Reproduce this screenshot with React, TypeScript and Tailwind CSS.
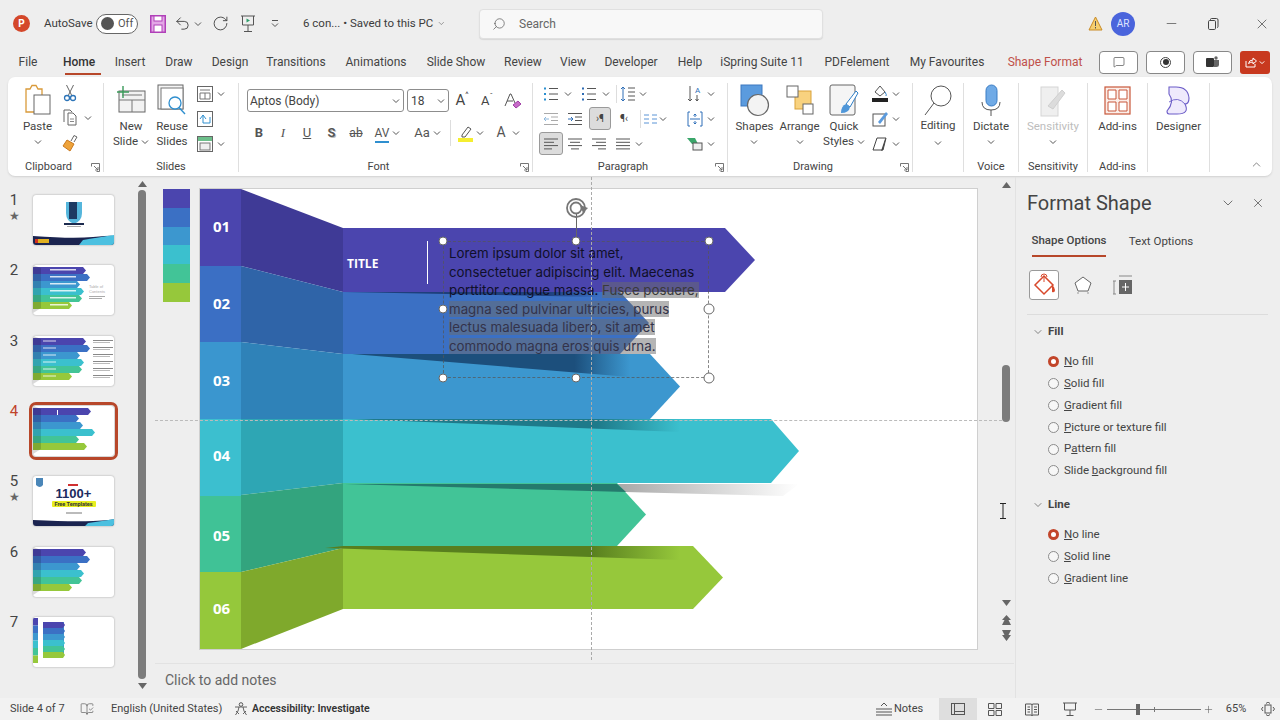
import type { ReactNode } from "react";
import {
  BookOpenCheck,
  ChevronDown,
  ChevronUp,
  MessageSquare,
  Minus,
  Plus,
  RotateCw,
  Search,
  Undo2,
  X,
} from "lucide-react";

const ink = "#444444";

function Chev({ className = "" }: { className?: string }) {
  return (
    <svg width="8" height="6" viewBox="0 0 8 6" className={`shrink-0 ${className}`}>
      <path d="M1 1.5 4 4.5 7 1.5" fill="none" stroke="#555" strokeWidth="1" />
    </svg>
  );
}

function Lines({ kind, color = "#555" }: { kind: "left" | "center" | "right" | "justify"; color?: string }) {
  const rows: [number, number][] =
    kind === "left"
      ? [[1, 15], [1, 11], [1, 15], [1, 9]]
      : kind === "center"
        ? [[1, 15], [3, 13], [1, 15], [4, 12]]
        : kind === "right"
          ? [[1, 15], [5, 15], [1, 15], [7, 15]]
          : [[1, 15], [1, 15], [1, 15], [1, 15]];
  return (
    <svg width="16" height="14" viewBox="0 0 16 14">
      {rows.map(([a, b], i) => (
        <path key={i} d={`M${a} ${2 + i * 3.3}H${b}`} stroke={color} strokeWidth="1" />
      ))}
    </svg>
  );
}

function BulletIcon({ numbered = false }: { numbered?: boolean }) {
  return (
    <svg width="16" height="16" viewBox="0 0 16 16">
      {[2.5, 8, 13.5].map((y) => (
        <g key={y}>
          <rect x="1" y={y - 1} width="2" height="2" fill={numbered ? "#2e6db5" : "#2a8fd0"} />
          <path d={`M6 ${y}H15`} stroke="#555" />
        </g>
      ))}
    </svg>
  );
}

function IconBox({ w, children, on = false }: { w: number; children: ReactNode; on?: boolean }) {
  return (
    <div
      style={{ width: w }}
      className={`flex h-[23px] shrink-0 items-center justify-center gap-[3px] rounded-[3px] ${on ? "border border-[#9a9a9a] bg-[#dcdcdc]" : ""}`}
    >
      {children}
    </div>
  );
}

function Launcher() {
  return (
    <svg width="9" height="9" viewBox="0 0 9 9" className="absolute right-[3px] top-[4px]">
      <path d="M.5 3.5V.5H8.500V8.500H5.500M3 3 7 7M7 4V7H4" fill="none" stroke="#666" strokeWidth="0.9" />
    </svg>
  );
}

function Group({
  width,
  label,
  launcher = false,
  last = false,
  children,
}: {
  width: number;
  label?: string;
  launcher?: boolean;
  last?: boolean;
  children: ReactNode;
}) {
  return (
    <div style={{ width }} className="flex shrink-0">
      <div className="flex min-w-0 flex-1 flex-col">
        <div className="flex h-[78px] min-w-0">{children}</div>
        <div className={`relative h-[16px] text-center text-[11px] leading-[16px] text-[#444] ${launcher ? "pr-[14px]" : ""}`}>
          <span>{label}</span>
          {launcher && <Launcher />}
        </div>
      </div>
      {!last && <div className="mb-[4px] mt-[2px] w-px bg-[#dfdfdf]" />}
    </div>
  );
}

function BigButton({
  width,
  icon,
  lines,
  chevron = "below",
  muted = false,
}: {
  width: number;
  icon: ReactNode;
  lines: string[];
  chevron?: "below" | "inline" | "none";
  muted?: boolean;
}) {
  return (
    <div style={{ width }} className="flex shrink-0 flex-col items-center">
      <div className="flex h-[38px] items-center justify-center">{icon}</div>
      <div className={`text-center text-[11.500px] leading-[15px] ${muted ? "text-[#bdbdbd]" : "text-[#444]"}`}>
        {lines.map((l, i) => (
          <div key={l} className="flex items-center justify-center gap-[3px] whitespace-nowrap">
            {l}
            {chevron === "inline" && i === lines.length - 1 && <Chev />}
          </div>
        ))}
        {chevron === "below" && <Chev className="mx-auto mt-[5px]" />}
      </div>
    </div>
  );
}

function TitleBar() {
  return (
    <div className="flex h-[47px] shrink-0 items-center text-[12px] text-[#3c3c3c]">
      <div className="ml-[13px] flex h-[17px] w-[17px] items-center justify-center rounded-full bg-[#d4472a] text-[10px] font-bold text-white">
        P
      </div>
      <span className="ml-[14px] w-[44px] whitespace-nowrap text-[11.500px]">AutoSave</span>
      <div className="ml-[8px] flex h-[20px] w-[42px] items-center gap-[4px] rounded-full border border-[#666] bg-white pl-[4px]">
        <div className="h-[13px] w-[13px] rounded-full bg-[#555]" />
        <span className="text-[11px] leading-none text-[#555]">Off</span>
      </div>
      <svg width="16" height="18" viewBox="0 0 16 18" className="ml-[12px]">
        <rect x=".75" y=".75" width="14.500" height="16.500" fill="#e3a7e6" stroke="#b040b8" strokeWidth="1.500" />
        <rect x="4" y="1" width="8" height="5" fill="#fff" stroke="#b040b8" />
        <rect x="4" y="10" width="8" height="7" fill="#fff" stroke="#b040b8" />
      </svg>
      <Undo2 size={17} strokeWidth={1.300} className="ml-[8px] text-[#444]" />
      <Chev className="ml-[3px]" />
      <RotateCw size={17} strokeWidth={1.300} className="ml-[10px] text-[#444]" />
      <svg width="16" height="18" viewBox="0 0 16 18" className="ml-[11px]">
        <path d="M1 1H15M2.500 1V10H13.500V1M8 10V16M4 16.500H12" fill="none" stroke="#555" />
        <path d="M6.500 3.500 10 5.500 6.500 7.500Z" fill="#2f9d6a" />
      </svg>
      <svg width="8" height="10" viewBox="0 0 8 10" className="ml-[15px]">
        <path d="M1 1.500H7M1 4.500 4 7.500 7 4.500" fill="none" stroke="#555" />
      </svg>
      <span className="ml-[24px] flex w-[143px] items-center gap-[4px] whitespace-nowrap text-[11.500px]">
        6 con... • Saved to this PC <ChevronDown size={13} strokeWidth={1.300} />
      </span>
      <div className="ml-[33px] flex h-[30px] w-[344px] items-center rounded-[4px] border border-[#e0e0e0] bg-[#f8f8f8] pl-[12px] shadow-[0_1px_1px_#d8d8d8]">
        <Search size={14} strokeWidth={1.200} className="-scale-x-100 text-[#555]" />
        <span className="ml-[13px] text-[12px] text-[#666]">Search</span>
      </div>
      <svg width="15" height="15" viewBox="0 0 15 15" className="ml-[265px]">
        <path d="M7.500 1 14 14H1Z" fill="#f6cf70" stroke="#c98a25" />
        <path d="M7.500 5V10M7.500 11V12.500" stroke="#555" />
      </svg>
      <div className="ml-[8px] flex h-[24px] w-[24px] items-center justify-center rounded-full bg-[#4a64dc] text-[10px] text-[#dfe5ff]">
        AR
      </div>
      <Minus size={15} strokeWidth={1.100} className="ml-[29px] text-[#444]" />
      <svg width="12" height="12" viewBox="0 0 12 12" className="ml-[28px]">
        <path d="M3.500 2.500V1.500Q3.500 .5 4.500 .5H9.500Q11 .5 11 2V8.500Q11 9.500 10 9.500" fill="none" stroke="#444" />
        <rect x="1.500" y="2.500" width="7" height="9" rx="1.200" fill="none" stroke="#444" />
      </svg>
      <X size={16} strokeWidth={1.100} className="ml-[35px] text-[#444]" />
    </div>
  );
}

const tabs: [string, number][] = [
  ["File", 40],
  ["Home", 62],
  ["Insert", 40],
  ["Draw", 58],
  ["Design", 44],
  ["Transitions", 88],
  ["Animations", 72],
  ["Slide Show", 88],
  ["Review", 46],
  ["View", 54],
  ["Developer", 62],
  ["Help", 56],
  ["iSpring Suite 11", 88],
  ["PDFelement", 102],
  ["My Favourites", 78],
  ["Shape Format", 118],
];

function TabRow() {
  return (
    <div className="flex h-[30px] shrink-0 items-center pl-[8px] text-[12px] text-[#444]">
      {tabs.map(([name, w]) => (
        <div key={name} style={{ width: w }} className="relative flex h-full shrink-0 items-center justify-center whitespace-nowrap">
          <span className={name === "Shape Format" ? "text-[#c0504a]" : name === "Home" ? "font-medium text-[#333]" : ""}>{name}</span>
          {name === "Home" && <div className="absolute bottom-[2px] left-[17px] h-[2px] w-[36px] bg-[#b7472a]" />}
        </div>
      ))}
      <div className="ml-[-5px] flex h-[23px] w-[39px] items-center justify-center rounded-[4px] border border-[#888] bg-white">
        <MessageSquare size={12} strokeWidth={1.200} className="text-[#333]" />
      </div>
      <div className="ml-[8px] flex h-[23px] w-[39px] items-center justify-center rounded-[4px] border border-[#888] bg-white">
        <div className="flex h-[11px] w-[11px] items-center justify-center rounded-full border border-[#444]">
          <div className="h-[6px] w-[6px] rounded-full bg-[#333]" />
        </div>
      </div>
      <div className="ml-[8px] flex h-[23px] w-[39px] items-center justify-center rounded-[4px] border border-[#888] bg-white">
        <svg width="13" height="13" viewBox="0 0 13 13">
          <rect x="0" y="2" width="8" height="9" rx="1" fill="#333" />
          <path d="M8 4H13V9Q13 11 10.500 11H8Z" fill="#666" />
          <circle cx="10" cy="2" r="1.700" fill="#666" />
        </svg>
      </div>
      <div className="ml-[8px] flex h-[23px] w-[30px] items-center justify-center gap-[2px] rounded-[3px] bg-[#c8391f]">
        <svg width="12" height="12" viewBox="0 0 12 12">
          <path d="M1 5V11H10V8M3.500 7.500Q4 4 8 4V2L11.500 5 8 8V6Q5.500 6 3.500 7.500Z" fill="none" stroke="#fff" />
        </svg>
        <svg width="6" height="5" viewBox="0 0 8 6">
          <path d="M1 1.500 4 4.500 7 1.500" fill="none" stroke="#fff" strokeWidth="1.300" />
        </svg>
      </div>
    </div>
  );
}

function Ribbon() {
  return (
    <div className="ml-[8px] flex h-[99px] w-[1264px] shrink-0 rounded-[7px] bg-white pt-[4px] shadow-[0_1px_2px_#d0d0d0]">
      <Group width={96} label="Clipboard" launcher>
        <BigButton
          width={59}
          lines={["Paste"]}
          icon={
            <svg width="26" height="32" viewBox="0 0 26 32">
              <path d="M1 5H5L7 1.500H11L13 5H17V28H1Z" fill="#fff" stroke="#d99a3a" strokeWidth="1.300" />
              <rect x="9" y="11" width="16" height="19" fill="#fff" stroke="#666" />
            </svg>
          }
        />
        <div className="-ml-[9px] flex flex-col">
          <IconBox w={24}>
            <svg width="14" height="18" viewBox="0 0 14 18">
              <path d="M3.500 1 9 12M10.500 1 5 12" stroke="#666" fill="none" />
              <circle cx="4" cy="14" r="2.500" fill="none" stroke="#2c74b8" strokeWidth="1.300" />
              <circle cx="10" cy="14" r="2.500" fill="none" stroke="#2c74b8" strokeWidth="1.300" />
            </svg>
          </IconBox>
          <div className="mt-[2px] flex items-center gap-[2px]">
            <IconBox w={24}>
              <svg width="14" height="17" viewBox="0 0 14 17">
                <path d="M1 13V1H7L9 3M5 16V4H10L13 7V16Z" fill="#fff" stroke="#666" />
                <path d="M7 10H11M7 12.500H11" stroke="#888" />
              </svg>
            </IconBox>
            <Chev />
          </div>
          <div className="mt-[2px]">
            <IconBox w={24}>
              <svg width="16" height="18" viewBox="0 0 16 18">
                <path d="M9 7 12 1.500 15 3 12 8" fill="#fff" stroke="#666" />
                <path d="M5 6 12 10 8 17 1 12Z" fill="#eea33b" stroke="#c9791f" />
              </svg>
            </IconBox>
          </div>
        </div>
      </Group>
      <Group width={135} label="Slides">
        <div className="ml-[4px]">
          <BigButton
            width={46}
            lines={["New", "Slide"]}
            chevron="inline"
            icon={
              <svg width="30" height="28" viewBox="0 0 30 28">
                <rect x="3" y="5" width="26" height="21" fill="#f2f2f2" stroke="#666" />
                <path d="M6 9H26M3 14H29M16 14V26" stroke="#777" fill="none" />
                <path d="M7 0V12M1 6H13" stroke="#3a9a5a" strokeWidth="1.400" />
              </svg>
            }
          />
        </div>
        <BigButton
          width={36}
          lines={["Reuse", "Slides"]}
          chevron="none"
          icon={
            <svg width="30" height="32" viewBox="0 0 30 32">
              <rect x="1" y="1" width="25" height="24" fill="#f5f5f5" stroke="#666" />
              <rect x="4" y="4" width="22" height="21" fill="#fff" stroke="#777" />
              <circle cx="18" cy="19" r="6" fill="#fff" stroke="#2f8fcf" strokeWidth="1.300" />
              <path d="M22 23.500 28 30" stroke="#2f8fcf" strokeWidth="1.400" />
            </svg>
          }
        />
        <div className="ml-[6px] flex flex-col">
          {[0, 1, 2].map((i) => (
            <div key={i} className="flex h-[25px] items-center gap-[4px]">
              <svg width="16" height="16" viewBox="0 0 16 16" className="ml-[1px]">
                <rect x=".5" y=".5" width="15" height="15" fill="#fff" stroke="#666" />
                {i === 0 && <path d="M3 4H13M8 7V13M3 7H13V13H3Z" stroke="#777" fill="none" />}
                {i === 1 && <path d="M3 8 6 4 9 8M6 4V12H13V6" stroke="#2f8fcf" fill="none" />}
                {i === 2 && (
                  <>
                    <rect x="1" y="1" width="14" height="4" fill="#6cbf8a" />
                    <rect x="3" y="7" width="10" height="7" fill="#eee" stroke="#777" />
                  </>
                )}
              </svg>
              {i !== 1 && <Chev />}
            </div>
          ))}
        </div>
      </Group>
      <Group width={294} label="Font" launcher>
        <div className="ml-[8px] flex flex-col">
          <div className="mt-[8px] flex h-[23px] items-center">
            <div className="flex h-[23px] w-[157px] items-center justify-between rounded-[3px] border border-[#8d8d8d] pl-[2px] pr-[3px] text-[12px] text-[#444]">
              Aptos (Body) <Chev />
            </div>
            <div className="ml-[3px] flex h-[23px] w-[42px] items-center justify-between rounded-[3px] border border-[#8d8d8d] pl-[3px] pr-[3px] text-[12px] text-[#444]">
              18 <Chev />
            </div>
            <div className="flex w-[26px] items-start justify-center text-[15px] text-[#444]">
              A<span className="text-[8px]">^</span>
            </div>
            <div className="flex w-[24px] items-start justify-center text-[13px] text-[#444]">
              A<span className="text-[8px]">ˇ</span>
            </div>
            <svg width="18" height="18" viewBox="0 0 18 18" className="ml-[5px]">
              <path d="M1 14 6 2H7L11 11M3 9H9" fill="none" stroke="#555" />
              <path d="M9 13 14 9 17 12 12 16Z" fill="#c76bc9" stroke="#a03fa5" />
            </svg>
          </div>
          <div className="mt-[9px] flex h-[23px] items-center text-[13px] text-[#555]">
            <IconBox w={24}><span className="font-bold">B</span></IconBox>
            <IconBox w={24}><span className="font-['Liberation_Serif',serif] italic">I</span></IconBox>
            <IconBox w={24}><span className="underline">U</span></IconBox>
            <IconBox w={25}><span className="font-semibold [text-shadow:1px_1px_0_#bbb]">S</span></IconBox>
            <IconBox w={24}><span className="text-[12px] line-through">ab</span></IconBox>
            <IconBox w={39}>
              <span className="relative text-[12px] leading-none">
                AV
                <span className="absolute -bottom-[4px] left-0 h-[2px] w-full bg-[#2f8fcf]" />
              </span>
              <Chev />
            </IconBox>
            <IconBox w={41}>
              <span className="text-[13px]">Aa</span>
              <Chev />
            </IconBox>
            <div className="mx-[2px] h-[26px] w-px bg-[#ddd]" />
            <IconBox w={36}>
              <svg width="15" height="18" viewBox="0 0 15 18">
                <path d="M4 11 10 3 13 5 7 13H4Z" fill="#fff" stroke="#555" />
                <rect x="0" y="14" width="15" height="4" fill="#f5ee30" />
              </svg>
              <Chev />
            </IconBox>
            <IconBox w={38}>
              <span className="text-[14px]">A</span>
              <Chev className="ml-[3px]" />
            </IconBox>
          </div>
        </div>
      </Group>
      <Group width={195} label="Paragraph" launcher>
        <div className="ml-[6px] flex w-[148px] flex-col">
          <div className="flex h-[25px] items-center">
            <IconBox w={24}><BulletIcon /></IconBox>
            <Chev className="ml-[1px]" />
            <div className="ml-[5px]"><IconBox w={24}><BulletIcon numbered /></IconBox></div>
            <Chev className="ml-[1px]" />
            <div className="ml-[6px] h-[18px] w-px bg-[#ddd]" />
            <IconBox w={22}>
              <svg width="16" height="16" viewBox="0 0 16 16">
                <path d="M3 1V15M1 3 3 1 5 3M1 13 3 15 5 13" fill="none" stroke="#2f6fb8" />
                <path d="M8 2H15M8 6H15M8 10H15M8 14H15" stroke="#555" />
              </svg>
            </IconBox>
            <Chev />
          </div>
          <div className="flex h-[25px] items-center">
            <IconBox w={24}>
              <svg width="16" height="14" viewBox="0 0 16 14">
                <path d="M1 1.500H15M8 5H15M8 8.500H15M1 12.500H15" stroke="#aaa" />
                <path d="M6 7H1M3 5 1 7 3 9" fill="none" stroke="#8fb8dc" />
              </svg>
            </IconBox>
            <IconBox w={23}>
              <svg width="16" height="14" viewBox="0 0 16 14">
                <path d="M1 1.500H15M8 5H15M8 8.500H15M1 12.500H15" stroke="#555" />
                <path d="M1 7H6M4 5 6 7 4 9" fill="none" stroke="#2f6fb8" />
              </svg>
            </IconBox>
            <div className="ml-[3px]"><IconBox w={22} on><span className="text-[10px] leading-none text-[#444]">›¶</span></IconBox></div>
            <div className="ml-[2px]"><IconBox w={22}><span className="text-[10px] leading-none text-[#444]">¶‹</span></IconBox></div>
            <div className="ml-[5px] h-[18px] w-px bg-[#ddd]" />
            <IconBox w={18}>
              <svg width="15" height="12" viewBox="0 0 15 12">
                <path d="M1 2H6M9 2H14M1 6H6M9 6H14M1 10H6M9 10H14" stroke="#5a94d6" />
              </svg>
            </IconBox>
            <Chev />
          </div>
          <div className="flex h-[25px] items-center">
            <IconBox w={24} on><Lines kind="left" /></IconBox>
            <IconBox w={24}><Lines kind="center" /></IconBox>
            <IconBox w={24}><Lines kind="right" /></IconBox>
            <IconBox w={24}><Lines kind="justify" /></IconBox>
            <Chev />
          </div>
        </div>
        <div className="flex flex-col">
          <div className="flex h-[25px] items-center gap-[4px]">
            <svg width="16" height="18" viewBox="0 0 16 18">
              <path d="M3 1V16M1 14 3 16 5 14" fill="none" stroke="#555" />
              <text x="8" y="8" fontSize="8" fill="#2f6fb8">A</text>
              <path d="M10 10V16M8.500 14 10 16 11.500 14" fill="none" stroke="#555" />
            </svg>
            <Chev />
          </div>
          <div className="flex h-[25px] items-center gap-[4px]">
            <svg width="16" height="16" viewBox="0 0 16 16">
              <path d="M3 1H1V15H3M13 1H15V15H13M3 8H13M8 3V6M8 10V13M6.500 4.500 8 3 9.500 4.500M6.500 11.500 8 13 9.500 11.500" fill="none" stroke="#2f6fb8" />
            </svg>
            <Chev />
          </div>
          <div className="flex h-[25px] items-center gap-[4px]">
            <svg width="16" height="14" viewBox="0 0 16 14">
              <path d="M0 1H8L11 7H5Z" fill="#3aa66a" />
              <rect x="6" y="6" width="9" height="7" fill="#eee" stroke="#555" />
            </svg>
            <Chev />
          </div>
        </div>
      </Group>
      <Group width={185} label="Drawing" launcher>
        <BigButton
          width={53}
          lines={["Shapes"]}
          icon={
            <svg width="30" height="33" viewBox="0 0 30 33">
              <rect x="1" y="1" width="21" height="21" fill="#5b9bde" stroke="#3c78c0" />
              <circle cx="18" cy="21" r="10.500" fill="#f3f3f3" stroke="#666" strokeWidth="1.200" />
            </svg>
          }
        />
        <BigButton
          width={37}
          lines={["Arrange"]}
          icon={
            <svg width="28" height="30" viewBox="0 0 28 30">
              <rect x="9" y="6" width="16" height="18" fill="#f8d27f" stroke="#d9a23a" />
              <rect x="1" y="1" width="11" height="11" fill="#fff" stroke="#666" />
              <rect x="17" y="19" width="10" height="10" fill="#fff" stroke="#666" />
            </svg>
          }
        />
        <BigButton
          width={52}
          lines={["Quick", "Styles"]}
          chevron="inline"
          icon={
            <svg width="30" height="33" viewBox="0 0 30 33">
              <rect x="1" y="1" width="25" height="30" rx="2" fill="#f5f5f5" stroke="#666" />
              <path d="M17 20 27 7 29 9 21 23Z" fill="#fff" stroke="#2f7fc7" />
              <path d="M12 29Q12 22 17 20L21 23Q20 29 12 29Z" fill="#4f97d9" />
            </svg>
          }
        />
        <div className="ml-[2px] flex flex-col">
          <div className="flex h-[25px] items-center gap-[4px]">
            <svg width="16" height="18" viewBox="0 0 16 18">
              <path d="M8 1 13 7 8 11 3 7Z" fill="#fff" stroke="#555" />
              <path d="M13 7Q15 10 14 11" stroke="#2f7fc7" fill="none" />
              <rect x="0" y="13" width="16" height="4" fill="#222" />
            </svg>
            <Chev />
          </div>
          <div className="flex h-[25px] items-center gap-[4px]">
            <svg width="16" height="16" viewBox="0 0 16 16">
              <rect x="1" y="3" width="12" height="12" fill="#fff" stroke="#555" />
              <path d="M6 11 14 1 16 3 8 13Z" fill="#5b9bde" />
            </svg>
            <Chev />
          </div>
          <div className="flex h-[25px] items-center gap-[4px]">
            <svg width="16" height="16" viewBox="0 0 16 16">
              <path d="M5 2H14L11 14H1Z" fill="#fff" stroke="#444" />
              <path d="M14 2 11 14 9 15 13 3Z" fill="#444" />
            </svg>
            <Chev />
          </div>
        </div>
      </Group>
      <Group width={51}>
        <div className="flex w-[50px] flex-col items-center">
          <div className="flex h-[38px] items-center">
            <svg width="28" height="33" viewBox="0 0 28 33">
              <circle cx="17" cy="12" r="10" fill="#fff" stroke="#555" />
              <path d="M10 19 1 31" stroke="#555" />
            </svg>
          </div>
          <span className="text-[11.500px] leading-[13px] text-[#444]">Editing</span>
          <Chev className="mt-[8px]" />
        </div>
      </Group>
      <Group width={55} label="Voice">
        <BigButton
          width={54}
          lines={["Dictate"]}
          icon={
            <svg width="20" height="33" viewBox="0 0 20 33">
              <rect x="5" y="1" width="11" height="21" rx="5.500" fill="#6faae6" stroke="#3a7cc4" />
              <path d="M1 18Q1 26 10 26Q19 26 19 18M10 26V32" fill="none" stroke="#555" />
            </svg>
          }
        />
      </Group>
      <Group width={69} label="Sensitivity">
        <BigButton
          width={68}
          lines={["Sensitivity"]}
          muted
          icon={
            <svg width="26" height="33" viewBox="0 0 26 33">
              <rect x="1" y="3" width="17" height="29" fill="#efefef" stroke="#d5d5d5" />
              <path d="M8 22 22 6 25 9 13 25Z" fill="#dcdcdc" stroke="#cfcfcf" />
            </svg>
          }
        />
      </Group>
      <Group width={60} label="Add-ins">
        <BigButton
          width={59}
          lines={["Add-ins"]}
          chevron="none"
          icon={
            <svg width="27" height="29" viewBox="0 0 27 29">
              <rect x="1" y="1" width="25" height="27" fill="#fbeee9" stroke="#c8573a" strokeWidth="1.200" />
              <path d="M4 4H12V13H4ZM15 4H23V13H15ZM4 16H12V25H4ZM15 16H23V25H15Z" fill="#fff" stroke="#c8573a" />
            </svg>
          }
        />
      </Group>
      <Group width={62}>
        <BigButton
          width={61}
          lines={["Designer"]}
          chevron="none"
          icon={
            <svg width="25" height="29" viewBox="0 0 25 29">
              <path d="M3 1H10Q22 1 23 12Q23 18 19 18Q24 28 11 28H3Q1 28 1 25Q9 16 3 8Z" fill="#efeafc" stroke="#6a5bc7" strokeWidth="1.100" />
              <path d="M3 16Q12 10 19 18" fill="none" stroke="#6a5bc7" strokeWidth="0.900" />
            </svg>
          }
        />
      </Group>
      <div className="flex flex-1 items-end justify-end pb-[5px] pr-[9px]">
        <ChevronUp size={13} strokeWidth={1.300} className="text-[#555]" />
      </div>
    </div>
  );
}

const bandColors = ["#4b45ae", "#3b70c4", "#3c97cf", "#3bc0ce", "#42c497", "#96c83b"];

function MiniBands({ widths, x = 0, h = 7 }: { widths: number[]; x?: number; h?: number }) {
  return (
    <>
      {widths.map((w, i) => {
        const y = 2 + i * h;
        return (
          <path
            key={i}
            d={`M${x} ${y}H${x + w - 3}L${x + w} ${y + h / 2}L${x + w - 3} ${y + h}H${x}Z`}
            fill={bandColors[i]}
          />
        );
      })}
      <path d={`M${x} 0 L${x + 8} 3 V${6 * h + 1} L${x} ${6 * h + 6}Z`} fill="#000" opacity="0.15" />
    </>
  );
}

function ThumbArt({ n }: { n: number }) {
  if (n === 1) {
    return (
      <svg viewBox="0 0 81 50" className="h-full w-full">
        <path d="M33 7H49V18Q49 26 41 29Q33 26 33 18Z" fill="#55b6dc" />
        <path d="M36 7H44V24H36Z" fill="#1d3a63" />
        <rect x="31" y="28" width="20" height="2" fill="#1d2b4f" />
        <rect x="34" y="31" width="14" height="1" fill="#aaa" />
        <path d="M0 41Q40 44 60 42T81 41V50H0Z" fill="#1b2450" />
        <path d="M50 45Q68 42 81 40V50H46Z" fill="#4cc0e0" />
        <rect x="2" y="44" width="14" height="4" fill="#e0b020" />
        <rect x="2" y="44" width="3" height="4" fill="#d03020" />
      </svg>
    );
  }
  if (n === 5) {
    return (
      <div className="relative flex h-full w-full flex-col items-center pt-[11px]">
        <svg viewBox="0 0 81 50" className="absolute inset-0 h-full w-full">
          <path d="M3 2H10V9Q7 13 3 9Z" fill="#4a86b8" />
          <rect x="35" y="8" width="10" height="2" fill="#d03030" />
          <rect x="33" y="36" width="16" height="2" fill="#bbb" />
          <path d="M0 44Q40 46 60 45T81 43V50H0Z" fill="#1b2450" />
          <path d="M55 47Q70 45 81 43V50H52Z" fill="#4cc0e0" />
        </svg>
        <span className="relative font-['Liberation_Sans',sans-serif] text-[13px] font-bold leading-[13px] text-[#1b2a60]">1100+</span>
        <span className="relative mt-[1px] w-[44px] rounded-[1px] bg-[#e8ee20] text-center text-[5.500px] font-bold leading-[6px] text-[#333]">Free Templates</span>
      </div>
    );
  }
  if (n === 7) {
    return (
      <svg viewBox="0 0 81 50" className="h-full w-full">
        {bandColors.map((c, i) => (
          <rect key={c} x="0" y={1 + i * 7.500} width="5" height="7.500" fill={c} />
        ))}
        <rect x="10" y="5" width="21" height="32" fill="#3c97cf" />
        {bandColors.map((c, i) => (
          <path key={c} d={`M10 ${5 + i * 6}H30L32 ${8 + i * 6}L30 ${11 + i * 6}H10Z`} fill={c} />
        ))}
      </svg>
    );
  }
  const widths: Record<number, number[]> = {
    2: [53, 57, 47, 51, 49, 39],
    3: [53, 57, 47, 51, 49, 39],
    4: [58, 46, 50, 62, 46, 54],
    6: [53, 57, 47, 51, 49, 39],
  };
  return (
    <svg viewBox="0 0 81 50" className="h-full w-full">
      <MiniBands widths={widths[n]} />
      {n === 2 &&
        [0, 1, 2, 3, 4, 5].map((i) => <rect key={i} x="17" y={4 + i * 7} width={26 - (i === 5 ? 8 : 0)} height="1.500" fill="#fff" opacity="0.8" />)}
      {n === 2 && (
        <>
          <text x="56" y="23" fontSize="4" fill="#aaa" fontFamily="Liberation Sans">Table of</text>
          <text x="56" y="28" fontSize="4" fill="#aaa" fontFamily="Liberation Sans">Contents</text>
          <rect x="56" y="31" width="16" height="1" fill="#aaa" />
          <rect x="56" y="33" width="13" height="1" fill="#aaa" />
        </>
      )}
      {n === 3 &&
        [0, 1, 2, 3, 4, 5].map((i) => (
          <g key={i}>
            <rect x="10" y={4.500 + i * 7} width="13" height="1" fill="#fff" opacity="0.8" />
            <rect x="60" y={4 + i * 7} width="20" height="1" fill="#888" />
            <rect x="60" y={6 + i * 7} width="17" height="1" fill="#bbb" />
          </g>
        ))}
      {n === 4 && <rect x="24" y="4" width="1" height="5" fill="#fff" />}
    </svg>
  );
}

function SlidePanel() {
  return (
    <div className="flex w-[155px] shrink-0">
      <div className="flex w-[135px] shrink-0 flex-col pt-[18px]">
        {[1, 2, 3, 4, 5, 6, 7].map((n) => (
          <div key={n} className="flex h-[70.330px] shrink-0">
            <div className="w-[33px] text-center">
              <div className={`-mt-[2px] pr-[5px] text-[15px] leading-[14px] ${n === 4 ? "text-[#c0432a]" : "text-[#444]"}`}>{n}</div>
              {(n === 1 || n === 5) && <div className="mt-[3px] pr-[5px] text-[12px] leading-[13px] text-[#666]">★</div>}
            </div>
            <div
              className={`relative h-[50px] w-[81px] overflow-hidden rounded-[3px] bg-white shadow-[0_0_2px_#999] ${n === 4 ? "outline-[3px] outline-offset-[1px] outline-[#b7472a]" : ""}`}
            >
              <ThumbArt n={n} />
            </div>
          </div>
        ))}
      </div>
      <div className="flex w-[14px] shrink-0 flex-col items-center pt-[4px]">
        <svg width="9" height="6" viewBox="0 0 9 6"><path d="M4.500 0 9 6H0Z" fill="#666" /></svg>
        <div className="mt-[3px] h-[489px] w-[8px] rounded-full bg-[#7c7c7c]" />
        <svg width="9" height="6" viewBox="0 0 9 6" className="mt-[4px]"><path d="M4.500 6 9 0H0Z" fill="#666" /></svg>
      </div>
    </div>
  );
}

function Handle({ x, y, big = false }: { x: number; y: number; big?: boolean }) {
  return (
    <div
      style={{ left: x - 200, top: y - 189 }}
      className={`absolute -translate-x-1/2 -translate-y-1/2 rounded-full border border-[#666] bg-white ${big ? "h-[11px] w-[11px]" : "h-[9px] w-[9px]"}`}
    />
  );
}

function arrow(top: number, bottom: number, end: number, tip: number) {
  const mid = (top + bottom) / 2;
  return `M343 ${top}H${end}L${tip} ${mid}L${end} ${bottom}H343Z`;
}

function Slide() {
  return (
    <div className="relative h-[460px] w-[777px] shrink-0 bg-white shadow-[0_0_0_1px_#cfcfcf]">
      <svg viewBox="200 189 777 460" className="absolute inset-0 h-full w-full">
        <defs>
          <linearGradient id="s1" x1="0" x2="1" y1="0" y2="0">
            <stop offset="0" stopColor="#1e3f7c" />
            <stop offset="0.8" stopColor="#1e3f7c" />
            <stop offset="1" stopColor="#1e3f7c" stopOpacity="0" />
          </linearGradient>
          <linearGradient id="s2" x1="0" x2="1" y1="0" y2="0">
            <stop offset="0" stopColor="#1c4f7c" />
            <stop offset="0.8" stopColor="#1c4f7c" />
            <stop offset="1" stopColor="#1c4f7c" stopOpacity="0" />
          </linearGradient>
          <linearGradient id="s3" x1="0" x2="1" y1="0" y2="0">
            <stop offset="0" stopColor="#1e7a8a" />
            <stop offset="0.75" stopColor="#1e7a8a" />
            <stop offset="1" stopColor="#1e7a8a" stopOpacity="0" />
          </linearGradient>
          <linearGradient id="s5" x1="0" x2="1" y1="0" y2="0">
            <stop offset="0" stopColor="#587f1e" />
            <stop offset="0.75" stopColor="#587f1e" />
            <stop offset="1" stopColor="#587f1e" stopOpacity="0" />
          </linearGradient>
          <linearGradient id="sg" x1="0" x2="1" y1="0" y2="0">
            <stop offset="0" stopColor="#a8a8a8" />
            <stop offset="1" stopColor="#a8a8a8" stopOpacity="0" />
          </linearGradient>
        </defs>
        <rect x="200" y="189" width="41" height="77" fill="#4b45ae" />
        <rect x="200" y="266" width="41" height="76" fill="#3b6fc4" />
        <rect x="200" y="342" width="41" height="77" fill="#3a96cf" />
        <rect x="200" y="419" width="41" height="77" fill="#3cbfcf" />
        <rect x="200" y="496" width="41" height="76" fill="#40c296" />
        <rect x="200" y="572" width="41" height="77" fill="#95c83b" />
        <path d="M241 189 343 228V292L241 266Z" fill="#3f3a96" />
        <path d="M241 266 343 292V354L241 342Z" fill="#2f64a8" />
        <path d="M241 342 343 354V419H241Z" fill="#2f82b8" />
        <path d="M241 419H343V483L241 495Z" fill="#2ea6b4" />
        <path d="M241 495 343 483V548L241 572Z" fill="#33a47e" />
        <path d="M241 572 343 548V609L241 649Z" fill="#7fa92c" />
        <path d="M617 484 799 484 783 496 625 492Z" fill="url(#sg)" />
        <path d={arrow(546, 609, 693, 723)} fill="#96c83b" />
        <path d={arrow(483, 546, 617, 646)} fill="#42c497" />
        <path d={arrow(419, 483, 771, 799)} fill="#3bc0ce" />
        <path d={arrow(354, 419, 650, 680)} fill="#3c97cf" />
        <path d={arrow(292, 354, 620, 649)} fill="#3b70c4" />
        <path d={arrow(228, 292, 725, 755)} fill="#4b45ae" />
        <path d="M343 292H600V297Z" fill="url(#s1)" />
        <path d="M352 354H630V377Z" fill="url(#s2)" />
        <path d="M348 419H680V432Z" fill="url(#s3)" />
        <path d="M345 484H617L626 492Z" fill="#257a6d" />
        <path d="M325 548 343 546H680V560Z" fill="url(#s5)" />
        {["01", "02", "03", "04", "05", "06"].map((t, i) => (
          <text
            key={t}
            x="221.500"
            y={[232, 309, 386, 461, 541, 614][i]}
            textAnchor="middle"
            fontFamily="Open Sans"
            fontWeight="700"
            fontSize="15"
            fill="#fff"
          >
            {t}
          </text>
        ))}
        <text x="347" y="267.500" fontFamily="Open Sans" fontWeight="700" fontSize="12" fill="#fff">TITLE</text>
        <path d="M427.500 241V284" stroke="#fff" />
      </svg>
      <div className="absolute left-[243px] top-[52px] h-[137px] w-[266px] border border-dashed border-[#555]/70" />
      <div className="absolute left-[376px] top-[24px] h-[28px] w-px bg-[#666]" />
      <svg width="24" height="24" viewBox="0 0 24 24" className="absolute left-[365px] top-[7px]">
        <circle cx="11" cy="12" r="9" fill="none" stroke="#777" strokeWidth="1.800" />
        <circle cx="11" cy="12" r="5.500" fill="none" stroke="#777" strokeWidth="1.800" />
        <path d="M15 9 23 12 18 17Z" fill="#777" />
      </svg>
      <div className="absolute left-[249px] top-[55px] font-['Inter',sans-serif] text-[13.300px] leading-[18.500px] text-[#10102a]">
        <div className="whitespace-nowrap">Lorem ipsum dolor sit amet,</div>
        <div className="whitespace-nowrap">consectetuer adipiscing elit. Maecenas</div>
        <div className="whitespace-nowrap">
          porttitor congue massa. <span className="bg-[#6b6b6b]/50 text-[#3a3a3a]">Fusce posuere,</span>
        </div>
        <div className="whitespace-nowrap"><span className="bg-[#6b6b6b]/50 text-[#33334a]">magna sed pulvinar ultricies, purus</span></div>
        <div className="whitespace-nowrap"><span className="bg-[#6b6b6b]/50 text-[#33334a]">lectus malesuada libero, sit amet</span></div>
        <div className="whitespace-nowrap"><span className="bg-[#6b6b6b]/50 text-[#33334a]">commodo magna eros quis urna.</span></div>
      </div>
      <Handle x={443} y={241} />
      <Handle x={576} y={241} />
      <Handle x={709} y={241} />
      <Handle x={443} y={309} />
      <Handle x={709} y={309} big />
      <Handle x={443} y={378} />
      <Handle x={576} y={378} />
      <Handle x={709} y={378} big />
    </div>
  );
}

function Canvas() {
  return (
    <div className="flex w-[859px] shrink-0 flex-col">
      <div className="relative flex h-[487px] shrink-0 border-b border-[#e2e2e2] pt-[12px]">
        <div className="ml-[8px] flex h-[113px] w-[27px] shrink-0 flex-col">
          {bandColors.map((c) => (
            <div key={c} style={{ backgroundColor: c }} className="flex-1" />
          ))}
        </div>
        <div className="ml-[10px]">
          <Slide />
        </div>
        <div className="ml-[24px] flex w-[10px] shrink-0 flex-col items-center">
          <svg width="9" height="6" viewBox="0 0 9 6" className="-mt-[7px]"><path d="M4.500 0 9 6H0Z" fill="#666" /></svg>
          <div className="mt-[177px] h-[57px] w-[8px] rounded-full bg-[#7c7c7c]" />
          <svg width="9" height="6" viewBox="0 0 9 6" className="mt-[178px]"><path d="M4.500 6 9 0H0Z" fill="#666" /></svg>
          <svg width="9" height="11" viewBox="0 0 9 11" className="mt-[9px]"><path d="M4.500 0 9 5H6.500L9 10H0L2.500 5H0Z" fill="#666" /></svg>
          <svg width="9" height="11" viewBox="0 0 9 11" className="mt-[4px]"><path d="M0 0H9L6.500 5H9L4.500 11 0 5H2.500Z" fill="#666" /></svg>
        </div>
        <div className="absolute left-0 top-[243px] w-[847px] border-t border-dashed border-[#bbb]" />
        <div className="absolute left-[436px] top-0 h-[483px] border-l border-dashed border-[#aaa]" />
        <svg width="8" height="16" viewBox="0 0 8 16" className="absolute left-[844px] top-[326px]">
          <path d="M1 .5H7M1 15.500H7M4 .5V15.500" fill="none" stroke="#222" />
        </svg>
      </div>
      <div className="flex h-[33px] shrink-0 items-center pl-[10px] text-[14px] text-[#666]">Click to add notes</div>
    </div>
  );
}

function Radio({ on = false, label }: { on?: boolean; label: ReactNode }) {
  return (
    <div className="flex h-[21.800px] items-center text-[11.500px] text-[#444]">
      <div className={`h-[11px] w-[11px] rounded-full ${on ? "border-[3px] border-[#c2452a] bg-white" : "border border-[#8c8c8c] bg-[#f7f7f7]"}`} />
      <span className="ml-[5px] whitespace-nowrap">{label}</span>
    </div>
  );
}

function FormatPanel() {
  return (
    <div className="ml-[1px] w-[265px] shrink-0 border-l border-[#e2e2e2] pl-[11px]">
      <div className="flex h-[48px] items-center pr-[15px] pt-[3px]">
        <span className="whitespace-nowrap text-[20px] text-[#444]">Format Shape</span>
        <ChevronDown size={16} strokeWidth={1.100} className="ml-auto text-[#444]" />
        <X size={14} strokeWidth={1.200} className="ml-[15px] text-[#444]" />
      </div>
      <div className="flex h-[32px] text-[11.500px] text-[#444]">
        <div className="ml-[5px] flex w-[74px] items-center justify-center whitespace-nowrap border-b-2 border-[#b7472a] pt-[2px] font-medium">Shape Options</div>
        <div className="ml-[24px] flex w-[62px] items-center justify-center whitespace-nowrap pt-[2px]">Text Options</div>
      </div>
      <div className="mt-[13px] flex h-[30px] items-center">
        <div className="ml-[2px] flex h-[30px] w-[30px] items-center justify-center rounded-[3px] border border-[#9a9a9a] bg-white">
          <svg width="24" height="24" viewBox="0 0 24 24">
            <path d="M12 3 21 12 12 21 3 12Z" fill="none" stroke="#d8492c" strokeWidth="1.500" />
            <path d="M12 3V9M9 4Q9 1 12 1T15 4" fill="none" stroke="#d8492c" />
            <path d="M20 12Q23 14 23 17T20 19Z" fill="#d8492c" />
          </svg>
        </div>
        <svg width="20" height="20" viewBox="0 0 20 20" className="ml-[14px]">
          <path d="M10 2 18 8 15 16H5L2 8Z" fill="#fff" stroke="#666" />
          <path d="M4 18H6M14 18H16" stroke="#999" />
        </svg>
        <svg width="20" height="20" viewBox="0 0 20 20" className="ml-[20px]">
          <rect x="6" y="5" width="13" height="14" fill="#666" />
          <path d="M6 1H19M1 6V19M0 6H3M0 19H3" stroke="#888" fill="none" />
          <path d="M12.500 8V16M9 12H16" stroke="#fff" />
        </svg>
      </div>
      <div className="mr-[12px] mt-[14px] h-px bg-[#dcdcdc]" />
      <div className="mt-[9px] flex h-[16px] items-center text-[11.500px] font-bold text-[#444]">
        <ChevronDown size={12} strokeWidth={1.400} className="ml-[5px] text-[#555]" />
        <span className="ml-[4px]">Fill</span>
      </div>
      <div className="ml-[21px] mt-[11px]">
        <Radio on label={<><u>N</u>o fill</>} />
        <Radio label={<><u>S</u>olid fill</>} />
        <Radio label={<><u>G</u>radient fill</>} />
        <Radio label={<><u>P</u>icture or texture fill</>} />
        <Radio label={<>P<u>a</u>ttern fill</>} />
        <Radio label={<>Slide <u>b</u>ackground fill</>} />
      </div>
      <div className="mt-[15px] flex h-[16px] items-center text-[11.500px] font-bold text-[#444]">
        <ChevronDown size={12} strokeWidth={1.400} className="ml-[5px] text-[#555]" />
        <span className="ml-[4px]">Line</span>
      </div>
      <div className="ml-[21px] mt-[11px]">
        <Radio on label={<><u>N</u>o line</>} />
        <Radio label={<><u>S</u>olid line</>} />
        <Radio label={<><u>G</u>radient line</>} />
      </div>
    </div>
  );
}

function StatusBar() {
  return (
    <div className="flex h-[22px] shrink-0 items-center bg-[#f2f2f2] text-[11px] text-[#444]">
      <div className="flex w-[876px] shrink-0 items-center">
        <span className="ml-[10px] w-[70px] whitespace-nowrap">Slide 4 of 7</span>
        <BookOpenCheck size={14} strokeWidth={1.100} className="text-[#555]" />
        <span className="ml-[17px] w-[124px] whitespace-nowrap">English (United States)</span>
        <svg width="14" height="14" viewBox="0 0 14 14" className="-ml-[1px]">
          <circle cx="7" cy="2.500" r="1.800" fill="none" stroke="#555" />
          <path d="M1 5H13M5 5 4 9 1.500 13M9 5 10 9 12.500 13M2 9 5 12M12 9 9 12" fill="none" stroke="#555" strokeWidth="0.900" />
        </svg>
        <span className="ml-[4px] whitespace-nowrap text-[10.500px] font-semibold text-[#333]">Accessibility: Investigate</span>
      </div>
      <svg width="16" height="14" viewBox="0 0 16 14">
        <path d="M0 7H16M0 10H16M0 13H16M5 4 8 1 11 4" fill="none" stroke="#555" />
      </svg>
      <span className="ml-[2px] w-[45px]">Notes</span>
      <div className="flex h-full w-[38px] items-center justify-center bg-[#dedede]">
        <svg width="14" height="12" viewBox="0 0 14 12">
          <rect x=".5" y=".5" width="13" height="11" fill="none" stroke="#555" />
          <path d="M3.500 .5V11.500M3.500 8.500H13.500" stroke="#555" />
        </svg>
      </div>
      <svg width="14" height="13" viewBox="0 0 14 13" className="ml-[11px]">
        <path d="M.5 .5H6V5.500H.5ZM8 .5H13.500V5.500H8ZM.5 7.500H6V12.500H.5ZM8 7.500H13.500V12.500H8Z" fill="none" stroke="#555" />
      </svg>
      <svg width="14" height="13" viewBox="0 0 14 13" className="ml-[23px]">
        <path d="M.5 1H6.500L7 2 7.500 1H13.500V12H7.500L7 13 6.500 12H.5ZM7 2V12M2.500 4H5M2.500 6.500H5M2.500 9H5M9 4H12M9 6.500H12M9 9H12" fill="none" stroke="#555" />
      </svg>
      <svg width="14" height="14" viewBox="0 0 14 14" className="ml-[24px]">
        <path d="M0 1H14M1.500 1V8H12.500V1M7 8V13M3.500 13.500H10.500" fill="none" stroke="#555" />
      </svg>
      <Minus size={11} strokeWidth={1.200} className="ml-[16px] text-[#555]" />
      <div className="relative ml-[3px] h-px w-[94px] bg-[#777]">
        <div className="absolute left-[29px] top-[-5px] h-[11px] w-[4px] bg-[#666]" />
        <div className="absolute left-[47px] top-[-2px] h-[5px] w-px bg-[#777]" />
      </div>
      <Plus size={11} strokeWidth={1.200} className="ml-[2px] text-[#555]" />
      <span className="ml-[10px] w-[24px] text-center">65%</span>
      <svg width="14" height="14" viewBox="0 0 14 14" className="ml-[13px]">
        <rect x="4" y="3" width="6" height="8" fill="none" stroke="#555" />
        <path d="M2 5 .5 7 2 9M12 5 13.500 7 12 9M5 1.500 7 0 9 1.500M5 12.500 7 14 9 12.500" fill="none" stroke="#555" />
      </svg>
    </div>
  );
}

export default function App() {
  return (
    <div
      style={{ color: ink }}
      className="flex h-[720px] w-[1280px] flex-col overflow-hidden bg-[#eeeeee] font-['Roboto',sans-serif]"
    >
      <TitleBar />
      <TabRow />
      <Ribbon />
      <div className="flex min-h-0 flex-1 pt-px">
        <SlidePanel />
        <Canvas />
        <FormatPanel />
      </div>
      <StatusBar />
    </div>
  );
}
